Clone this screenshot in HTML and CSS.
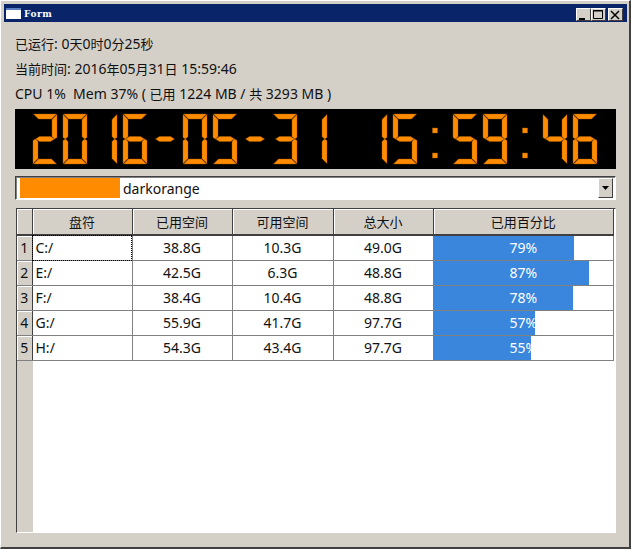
FILE: index.html
```html
<!DOCTYPE html>
<html lang="en">
<head>
    <meta charset="UTF-8">
    <meta name="viewport" content="width=device-width, initial-scale=1.0">
    <title>Form</title>
    <link rel="stylesheet" href="styles.css">
</head>
<body>
<div class="window">
    <div class="titlebar">
        <span class="title-icon"></span>
        <span class="title-text">Form</span>
        <div class="title-buttons">
            <button class="win-btn" type="button"><svg width="14" height="14"><rect x="3" y="10" width="6" height="2" fill="#000"/></svg></button>
            <button class="win-btn" type="button"><svg width="14" height="14"><path d="M2.5 2.5h9v8h-9zM2 3h10" fill="none" stroke="#000"/></svg></button>
            <button class="win-btn win-close" type="button"><svg width="14" height="14"><path d="M3 3l8 8M11 3l-8 8" fill="none" stroke="#000" stroke-width="1.5"/></svg></button>
        </div>
    </div>

    <div class="content">
        <p class="info"><span class="cjk">已运行</span>: 0<span class="cjk">天</span>0<span class="cjk">时</span>0<span class="cjk">分</span>25<span class="cjk">秒</span></p>
        <p class="info"><span class="cjk">当前时间</span>: 2016<span class="cjk">年</span>05<span class="cjk">月</span>31<span class="cjk">日</span> 15:59:46</p>
        <p class="info">CPU 1%&nbsp; Mem 37% ( <span class="cjk">已用</span> 1224 MB / <span class="cjk">共</span> 3293 MB )</p>

        <svg class="lcd" width="601" height="60" viewBox="0 0 601 60" role="img" aria-label="2016-05-31 15:59:46">
            <defs>
                <polygon id="sa" points="0.5,0 23.5,0 18.5,5 5.5,5"/>
                <polygon id="sb" points="24,0.5 24,23.5 21.5,25 19,22.5 19,5.5"/>
                <polygon id="sc" points="24,26.5 24,49.5 19,44.5 19,27.5 21.5,25"/>
                <polygon id="sd" points="5.5,45 18.5,45 23.5,50 0.5,50"/>
                <polygon id="se" points="0,26.5 2.5,25 5,27.5 5,44.5 0,49.5"/>
                <polygon id="sf" points="0,0.5 5,5.5 5,22.5 2.5,25 0,23.5"/>
                <polygon id="sg" points="2.5,25 6.5,22.5 17.5,22.5 21.5,25 17.5,27.5 6.5,27.5"/>
                <g id="d0"><use href="#sa"/><use href="#sb"/><use href="#sc"/><use href="#sd"/><use href="#se"/><use href="#sf"/></g>
                <g id="d1"><use href="#sb"/><use href="#sc"/></g>
                <g id="d2"><use href="#sa"/><use href="#sb"/><use href="#sg"/><use href="#se"/><use href="#sd"/></g>
                <g id="d3"><use href="#sa"/><use href="#sb"/><use href="#sg"/><use href="#sc"/><use href="#sd"/></g>
                <g id="d4"><use href="#sf"/><use href="#sg"/><use href="#sb"/><use href="#sc"/></g>
                <g id="d5"><use href="#sa"/><use href="#sf"/><use href="#sg"/><use href="#sc"/><use href="#sd"/></g>
                <g id="d6"><use href="#sa"/><use href="#sf"/><use href="#sg"/><use href="#se"/><use href="#sc"/><use href="#sd"/></g>
                <g id="d9"><use href="#sa"/><use href="#sf"/><use href="#sb"/><use href="#sg"/><use href="#sc"/><use href="#sd"/></g>
                <g id="dot"><rect x="9.5" y="14" width="5" height="5"/><rect x="9.5" y="39" width="5" height="5"/></g>
            </defs>
            <g class="lcd-digits" transform="translate(18,5)">
                <use href="#d2" x="0"/><use href="#d0" x="30"/><use href="#d1" x="60"/><use href="#d6" x="90"/>
                <use href="#sg" x="120"/>
                <use href="#d0" x="150"/><use href="#d5" x="180"/>
                <use href="#sg" x="210"/>
                <use href="#d3" x="240"/><use href="#d1" x="270"/>
                <use href="#d1" x="330"/><use href="#d5" x="360"/>
                <use href="#dot" x="390"/>
                <use href="#d5" x="420"/><use href="#d9" x="450"/>
                <use href="#dot" x="480"/>
                <use href="#d4" x="510"/><use href="#d6" x="540"/>
            </g>
        </svg>

        <div class="combo">
            <span class="swatch"></span>
            <span class="combo-text">darkorange</span>
            <span class="combo-arrow"><svg width="7" height="4"><path d="M0 0h7L3.5 4z" fill="#000"/></svg></span>
        </div>

        <div class="table-box">
            <table class="disks">
                <colgroup>
                    <col class="col-head"><col class="col-a"><col class="col-a"><col class="col-b"><col class="col-a"><col>
                </colgroup>
                <thead>
                    <tr><th></th><th>盘符</th><th>已用空间</th><th>可用空间</th><th>总大小</th><th>已用百分比</th></tr>
                </thead>
                <tbody>
                    <tr><th>1</th><td class="name current">C:/</td><td>38.8G</td><td>10.3G</td><td>49.0G</td><td class="pct"><div class="bar" style="width:79%"></div><span>79%</span></td></tr>
                    <tr><th>2</th><td class="name">E:/</td><td>42.5G</td><td>6.3G</td><td>48.8G</td><td class="pct"><div class="bar" style="width:87%"></div><span>87%</span></td></tr>
                    <tr><th>3</th><td class="name">F:/</td><td>38.4G</td><td>10.4G</td><td>48.8G</td><td class="pct"><div class="bar" style="width:78%"></div><span>78%</span></td></tr>
                    <tr><th>4</th><td class="name">G:/</td><td>55.9G</td><td>41.7G</td><td>97.7G</td><td class="pct"><div class="bar" style="width:57%"></div><span>57%</span></td></tr>
                    <tr><th>5</th><td class="name">H:/</td><td>54.3G</td><td>43.4G</td><td>97.7G</td><td class="pct"><div class="bar" style="width:55%"></div><span>55%</span></td></tr>
                </tbody>
            </table>
        </div>
    </div>
</div>
</body>
</html>
```

FILE: styles.css
```css
html, body {
    margin: 0;
    padding: 0;
    height: 100%;
    overflow: hidden;
}

body {
    background-color: #d4d0c8;
    font-family: "Noto Sans", "Noto Sans CJK SC", sans-serif;
    font-size: 14px;
    color: #111;
}

.cjk {
    font-size: 13px;
}

.window {
    box-sizing: border-box;
    width: 631px;
    height: 549px;
    border-top: 1px solid #fff;
    border-left: 1px solid #fff;
    border-right: 2px solid #404040;
    border-bottom: 2px solid #404040;
    padding: 3px 2px 0 3px;
}

.titlebar {
    display: flex;
    align-items: center;
    height: 18px;
    background-color: #0a246a;
    padding: 0 4px 0 2px;
}

.title-icon {
    width: 15px;
    height: 11px;
    background-color: #fff;
    border-top: 2px solid #5a7fc0;
    box-sizing: border-box;
}

.title-text {
    margin-left: 3px;
    padding-top: 2px;
    font-family: "DejaVu Serif", serif;
    font-size: 9px;
    font-weight: bold;
    letter-spacing: 0.5px;
    color: #fff;
}

.title-buttons {
    display: flex;
    margin-left: auto;
    padding-top: 2px;
}

.win-btn {
    box-sizing: border-box;
    width: 15px;
    height: 13px;
    padding: 0;
    margin: 0;
    background-color: #d4d0c8;
    border: 1px solid;
    border-color: #fff #404040 #404040 #fff;
    display: flex;
}

.win-btn svg {
    margin: -1px 0 0 -1px;
}

.win-close {
    margin-left: 2px;
}

.content {
    padding: 9px 11px 0 11px;
}

.info {
    margin: 0;
    height: 25px;
    line-height: 25px;
    white-space: nowrap;
}

.lcd {
    display: block;
    margin-top: 3px;
    background-color: #000;
}

.lcd-digits {
    fill: #ff8c00;
    stroke: #a85c00;
    stroke-width: 0.4;
}

.combo {
    box-sizing: border-box;
    display: flex;
    align-items: center;
    height: 24px;
    margin-top: 7px;
    padding: 0 2px 0 4px;
    background-color: #fff;
    border: 1px solid;
    border-color: #404040 #fff #fff #404040;
    box-shadow: inset 1px 1px 0 #808080;
}

.swatch {
    width: 100px;
    height: 20px;
    background-color: #ff8c00;
}

.combo-text {
    margin-left: 3px;
}

.combo-arrow {
    box-sizing: border-box;
    display: flex;
    align-items: center;
    justify-content: center;
    width: 15px;
    height: 20px;
    margin-left: auto;
    background-color: #d4d0c8;
    border: 1px solid;
    border-color: #fff #404040 #404040 #fff;
}

.table-box {
    box-sizing: border-box;
    width: 600px;
    height: 325px;
    margin: 8px 0 0 1px;
    background-color: #fff;
    border: 1px solid;
    border-color: #404040 #fff #fff #404040;
    background-image: linear-gradient(#d4d0c8, #d4d0c8);
    background-repeat: no-repeat;
    background-size: 16px 100%;
}

.disks {
    table-layout: fixed;
    width: 597px;
    border-collapse: collapse;
    text-align: center;
}

.col-head {
    width: 15px;
}

.col-a {
    width: 100px;
}

.col-b {
    width: 101px;
}

.disks th {
    padding: 0;
    font-weight: normal;
    background-color: #d4d0c8;
}

.disks thead th {
    height: 25px;
    font-size: 13px;
    border-right: 1px solid #404040;
    border-bottom: 2px solid #404040;
    box-shadow: inset 1px 1px 0 #fff;
}

.disks tbody th {
    height: 22px;
    padding-bottom: 2px;
    border-right: 1px solid #404040;
    border-bottom: 1px solid #808080;
    box-shadow: inset 1px 1px 0 #fff;
}

.disks td {
    height: 22px;
    padding: 0 0 2px 0;
    background-color: #fff;
    border-right: 1px solid #808080;
    border-bottom: 1px solid #808080;
}

.disks .name {
    text-align: left;
    padding-left: 3px;
}

.disks .current {
    outline: 1px dotted #000;
    outline-offset: -1px;
}

.disks .pct {
    position: relative;
    color: #fff;
}

.bar {
    position: absolute;
    left: -1px;
    top: 0;
    bottom: 0;
    background-color: #3a86dc;
}

.pct span {
    position: relative;
}
```
